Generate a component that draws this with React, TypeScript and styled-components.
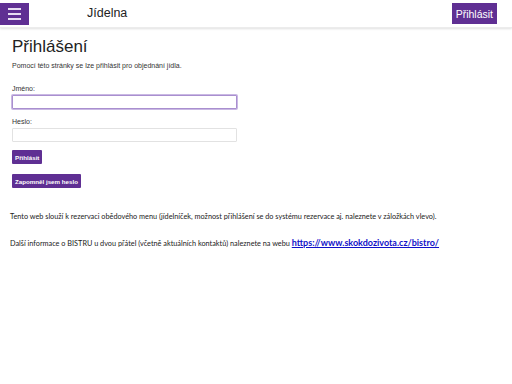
import * as React from "react";
import styled, { createGlobalStyle } from "styled-components";

const GlobalStyle = createGlobalStyle`
  html, body {
    margin: 0;
    padding: 0;
    background: #ffffff;
    font-family: "Liberation Sans", Arial, sans-serif;
    color: #222222;
  }
`;

const purple = "#5f2f93";

const Page = styled.div`
  width: 512px;
  min-height: 384px;
  background: #ffffff;
`;

const Header = styled.header`
  height: 28px;
  display: flex;
  align-items: center;
  justify-content: space-between;
  box-shadow: 0 1px 2px rgba(0, 0, 0, 0.12);
  border-bottom: 1px solid #ececec;
  box-sizing: border-box;
  padding-right: 15px;
`;

const HeaderLeft = styled.div`
  display: flex;
  align-items: center;
`;

const MenuButton = styled.button`
  width: 29px;
  height: 22px;
  background: ${purple};
  border: none;
  padding: 0;
  display: flex;
  flex-direction: column;
  justify-content: center;
  align-items: center;
  gap: 3px;
`;

const MenuLine = styled.span`
  display: block;
  width: 13px;
  height: 2px;
  background: #e6dcf2;
`;

const Brand = styled.div`
  margin-left: 58px;
  font-size: 12.5px;
  color: #222;
  margin-top: -2px;
`;

const HeaderButton = styled.button`
  background: ${purple};
  color: #ffffff;
  border: none;
  height: 21px;
  padding: 0 4px;
  font-family: "Liberation Sans", Arial, sans-serif;
  font-size: 10.5px;
`;

const Content = styled.main`
  padding: 9px 12px 0 12px;
`;

const Title = styled.h1`
  margin: 0;
  font-size: 17px;
  font-weight: normal;
  color: #222;
  line-height: 20px;
`;

const Intro = styled.p`
  margin: 5px 0 0 0;
  font-size: 7px;
  color: #333;
`;

const Form = styled.form`
  width: 225px;
  margin-top: 15px;
  display: flex;
  flex-direction: column;
`;

const Label = styled.label`
  font-size: 7px;
  color: #333;
  line-height: 9px;
`;

const Input = styled.input<{ $focused?: boolean }>`
  box-sizing: border-box;
  width: 225px;
  height: 14px;
  margin: 2px 0 8px 0;
  padding: 0 3px;
  border: 1px solid ${(p) => (p.$focused ? "#a98fcf" : "#e2e2e2")};
  box-shadow: ${(p) => (p.$focused ? "0 0 0 1px #c9b8e3" : "none")};
  border-radius: 1px;
  font-size: 8px;
  caret-color: #222;
  outline: none;
`;

const SmallButton = styled.button<{ $mt?: number }>`
  align-self: flex-start;
  margin-top: ${(p) => p.$mt ?? 0}px;
  background: ${purple};
  color: #ffffff;
  border: none;
  border-radius: 1px;
  height: 14px;
  padding: 0 3px;
  font-family: "Liberation Sans", Arial, sans-serif;
  font-size: 6.2px;
  font-weight: bold;
`;

const Info = styled.p<{ $mt: number }>`
  margin: ${(p) => p.$mt}px 0 0 -2px;
  font-family: Lato, "Open Sans", sans-serif;
  font-size: 7.3px;
  color: #222;
`;

const Link = styled.a`
  font-size: 9px;
  font-weight: bold;
  color: #1010c8;
  text-decoration: underline;
`;

export default function App() {
  return (
    <Page>
      <GlobalStyle />
      <Header>
        <HeaderLeft>
          <MenuButton aria-label="menu">
            <MenuLine />
            <MenuLine />
            <MenuLine />
          </MenuButton>
          <Brand>Jídelna</Brand>
        </HeaderLeft>
        <HeaderButton>Přihlásit</HeaderButton>
      </Header>
      <Content>
        <Title>Přihlášení</Title>
        <Intro>Pomocí této stránky se lze přihlásit pro objednání jídla.</Intro>
        <Form onSubmit={(e) => e.preventDefault()}>
          <Label>Jméno:</Label>
          <Input $focused type="text" autoFocus />
          <Label>Heslo:</Label>
          <Input type="password" />
          <SmallButton type="submit" $mt={0}>Přihlásit</SmallButton>
          <SmallButton type="button" $mt={10}>Zapomněl jsem heslo</SmallButton>
        </Form>
        <Info $mt={24}>
          Tento web slouží k rezervaci obědového menu (jídelníček, možnost přihlášení se do systému rezervace aj. naleznete v záložkách vlevo).
        </Info>
        <Info $mt={16}>
          Další informace o BISTRU u dvou přátel (včetně aktuálních kontaktů) naleznete na webu{" "}
          <Link href="#">https://www.skokdozivota.cz/bistro/</Link>
        </Info>
      </Content>
    </Page>
  );
}
